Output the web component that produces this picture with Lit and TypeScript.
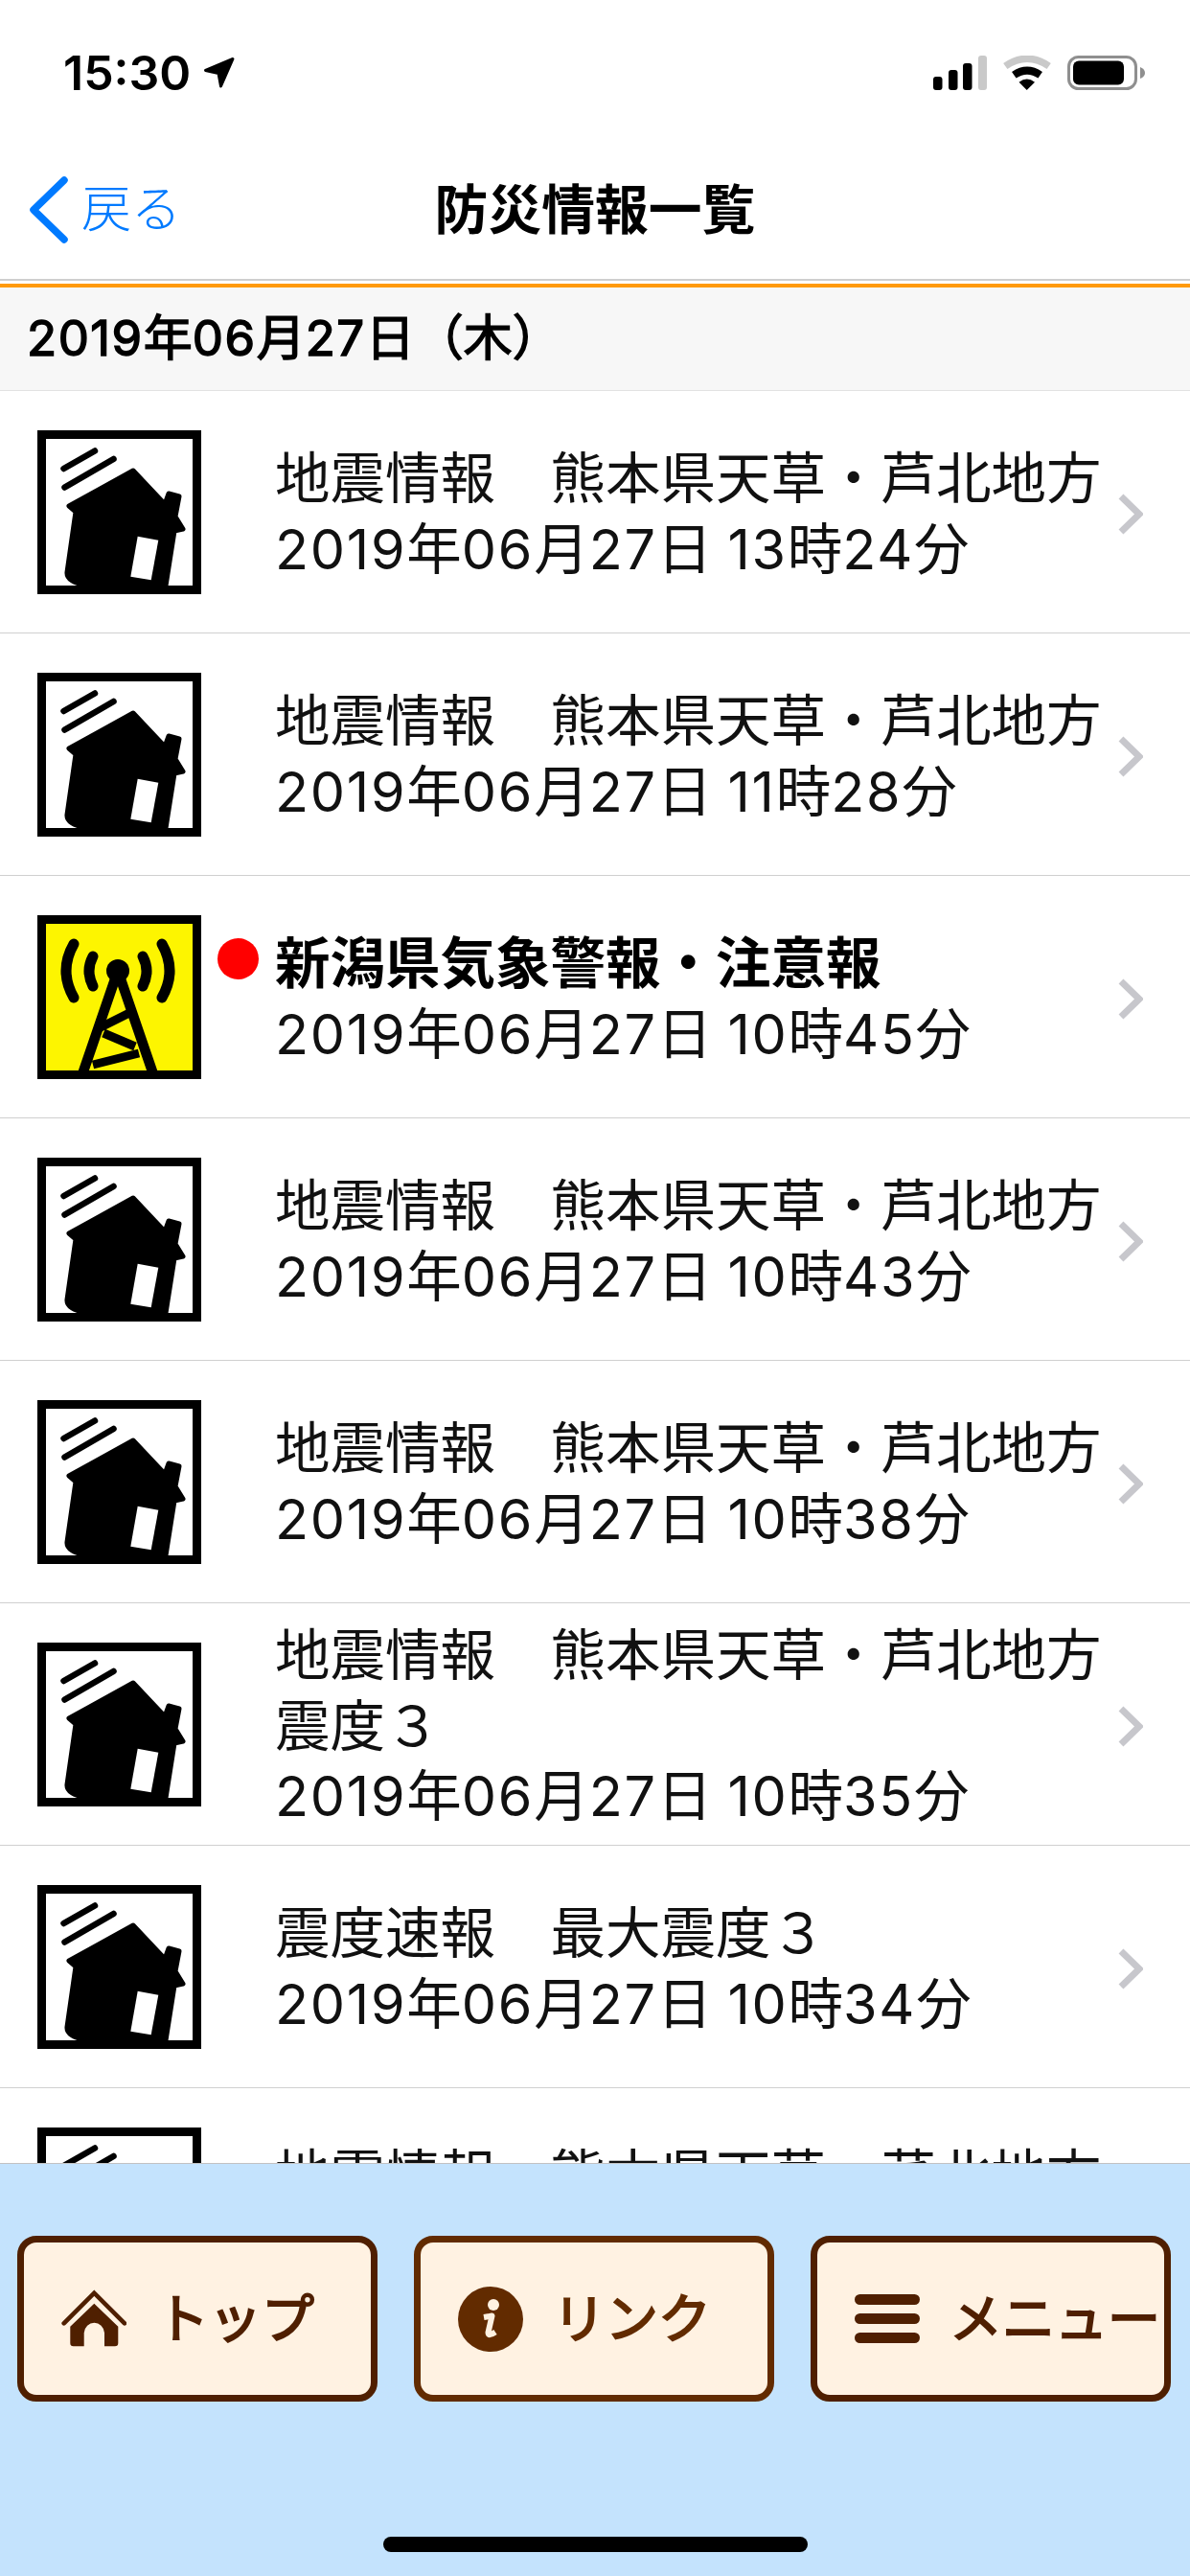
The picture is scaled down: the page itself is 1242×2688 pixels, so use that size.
import { LitElement, css, html, svg } from 'lit';
import { customElement } from 'lit/decorators.js';

type Row = { kind: 'quake' | 'alert'; lines: string[]; unread?: boolean };

const QUAKE = '地震情報　熊本県天草・芦北地方';

const rows: Row[] = [
  { kind: 'quake', lines: [QUAKE, '2019年06月27日 13時24分'] },
  { kind: 'quake', lines: [QUAKE, '2019年06月27日 11時28分'] },
  { kind: 'alert', unread: true, lines: ['新潟県気象警報・注意報', '2019年06月27日 10時45分'] },
  { kind: 'quake', lines: [QUAKE, '2019年06月27日 10時43分'] },
  { kind: 'quake', lines: [QUAKE, '2019年06月27日 10時38分'] },
  { kind: 'quake', lines: [QUAKE, '震度３', '2019年06月27日 10時35分'] },
  { kind: 'quake', lines: ['震度速報　最大震度３', '2019年06月27日 10時34分'] },
  { kind: 'quake', lines: [QUAKE, '2019年06月27日 10時30分'] },
];

const quakeIcon = svg`
  <rect x="4.5" y="4.5" width="162" height="162" fill="#fff" stroke="#000" stroke-width="9" />
  <path d="M27.5 40 60 21.5M28.5 59.5 79.5 30" stroke="#000" stroke-width="6.5" stroke-linecap="round" fill="none" />
  <path
    d="M33 79 100 42 133 77 137 66 148 69 144 90 152 103 143 105 134 162H52Q30 158 31 148L40 85Z"
    fill="#000" stroke="#000" stroke-width="5" stroke-linejoin="round" />
  <path d="M104.7 110.7 126.3 114.7 118.7 156.3 97.3 152.7Z" fill="#fff" />
`;

const alertIcon = svg`
  <rect x="4.5" y="4.5" width="162" height="162" fill="#fdf500" />
  <g fill="none" stroke="#000" stroke-linecap="round" stroke-width="11">
    <path d="M38 30Q22 58 38 86M58 43Q50 58 58 74M130 30Q146 58 130 86M110 43Q118 58 110 74" />
  </g>
  <g fill="none" stroke="#000" stroke-width="10.5">
    <path d="M84 58 47 166M84 58 121 166" />
  </g>
  <g fill="none" stroke="#000" stroke-width="9">
    <path d="M66 117 102 99M69 123 102 137M58 156 106 144" />
  </g>
  <circle cx="84" cy="58" r="12" fill="#000" />
  <rect x="4.5" y="4.5" width="162" height="162" fill="none" stroke="#000" stroke-width="9" />
`;

// digits run a little wider than Inter's, so they get their own tracking
const spaced = (text: string) =>
  text.split(/(\d+)/).map((part, i) => (i % 2 ? html`<span class="num">${part}</span>` : part));

@customElement('app-root')
export class AppRoot extends LitElement {
  static styles = css`
    :host {
      display: flex;
      flex-direction: column;
      height: 2688px;
      overflow: hidden;
      background: #fff;
      color: #000;
      font-family: Inter, 'Noto Sans CJK JP', sans-serif;
    }

    svg {
      display: block;
      flex: none;
    }

    .num {
      letter-spacing: 0.03em;
    }

    .status {
      display: flex;
      align-items: flex-start;
      height: 130px;
      box-sizing: border-box;
      padding: 46px 46px 0 66px;
    }

    .clock {
      font-size: 50px;
      font-weight: 600;
      line-height: 60px;
    }

    .arrow {
      margin: 13px 0 0 13px;
    }

    .status-icons {
      display: flex;
      gap: 17px;
      margin: 12px 0 0 auto;
    }

    .nav {
      display: grid;
      grid-template-columns: 1fr auto 1fr;
      align-items: center;
      height: 163px;
      box-sizing: border-box;
      padding-top: 8px;
      border-bottom: 2px solid #cfcfcf;
    }

    .back {
      display: flex;
      align-items: center;
      gap: 13px;
      padding-left: 30px;
      color: #007aff;
      font-size: 52px;
      font-weight: 300;
    }

    .back svg {
      margin-top: 8px;
    }

    .title {
      font-size: 55.8px;
      font-weight: 700;
    }

    .accent {
      height: 4px;
      margin-top: 3px;
      background: #ff9a0a;
    }

    .section {
      display: flex;
      align-items: center;
      height: 108px;
      box-sizing: border-box;
      padding: 0 0 10px 28px;
      background: #f7f7f7;
      border-bottom: 1px solid #e2e2e2;
      font-size: 51px;
      -webkit-text-stroke: 1.5px currentColor;
    }

    .list {
      flex: 1;
      min-height: 0;
      overflow: hidden;
    }

    .row {
      display: flex;
      align-items: center;
      height: 253px;
      box-sizing: border-box;
      padding: 0 49px 0 39px;
      border-bottom: 1.5px solid #d0d0d0;
    }

    .mark {
      align-self: flex-start;
      width: 77px;
      height: 43px;
      margin-top: 65px;
      padding-left: 17px;
      box-sizing: border-box;
      flex: none;
    }

    .dot {
      width: 43px;
      height: 43px;
      border-radius: 50%;
      background: #ff0000;
    }

    .text {
      flex: 1;
      min-width: 0;
      padding-top: 5px;
      font-size: 57.5px;
      line-height: 73.4px;
      color: #111;
      white-space: nowrap;
    }

    .text .strong {
      font-weight: 700;
      color: #000;
    }

    .chevron {
      margin-top: 4px;
    }

    .bar {
      display: flex;
      flex-direction: column;
      height: 431px;
      box-sizing: border-box;
      padding-top: 75px;
      background: #c4e3fd;
      border-top: 1px solid #c2c2c2;
    }

    .buttons {
      display: flex;
      gap: 38px;
      padding-left: 18px;
    }

    .button {
      display: flex;
      align-items: center;
      gap: 31px;
      width: 376px;
      height: 173px;
      box-sizing: border-box;
      padding-left: 39px;
      border: 7px solid #4f1f00;
      border-radius: 20px;
      background: #fff2e2;
      color: #4f1f00;
      font-size: 55px;
      -webkit-text-stroke: 2px currentColor;
      white-space: nowrap;
    }

    .button span {
      margin-bottom: 10px;
    }

    .button.info {
      border-color: #622b00;
      color: #622b00;
    }

    .home-bar {
      align-self: center;
      width: 443px;
      height: 16px;
      margin-top: 141px;
      border-radius: 8px;
      background: #000;
    }
  `;

  private renderStatus() {
    return html`
      <div class="status">
        <span class="clock">15:30</span>
        <svg class="arrow" width="33" height="33" viewBox="0 0 33 33">
          <path d="M31 2.500 2.500 14.500 16 17.500 18.500 31Z" fill="#000" stroke="#000" stroke-width="3" stroke-linejoin="round" />
        </svg>
        <div class="status-icons">
          <svg width="56" height="36" viewBox="0 0 56 36">
            <rect x="0" y="22" width="9.500" height="14" rx="3" />
            <rect x="16" y="15" width="9.500" height="21" rx="3" />
            <rect x="31" y="8" width="9.500" height="28" rx="3" />
            <rect x="47" y="0" width="9" height="36" rx="3" fill="#c9c9c9" />
          </svg>
          <svg width="50" height="36" viewBox="0 0 50 36">
            <path d="M2.300 11Q25 -4.400 47.700 11" fill="none" stroke="#c9c9c9" stroke-width="7.500" />
            <path d="M11.300 20.300Q25 11 38.700 20.300" fill="none" stroke="#000" stroke-width="8" />
            <path d="M24.700 36 16.500 27.700Q24.700 21.500 33 27.700Z" />
          </svg>
          <svg width="82" height="36" viewBox="0 0 82 36">
            <rect x="1.500" y="1.500" width="70" height="33" rx="10" fill="none" stroke="#8f8f8f" stroke-width="3" />
            <rect x="6" y="5.500" width="53" height="25" rx="6" />
            <path d="M76 12Q81 14 81 18T76 24Z" fill="#8f8f8f" />
          </svg>
        </div>
      </div>
    `;
  }

  private renderRow(row: Row) {
    return html`
      <div class="row">
        <svg width="171" height="171" viewBox="0 0 171 171">${row.kind === 'quake' ? quakeIcon : alertIcon}</svg>
        <div class="mark">${row.unread ? html`<div class="dot"></div>` : ''}</div>
        <div class="text">
          ${row.lines.map((line, i) => html`<div class=${row.unread && i === 0 ? 'strong' : ''}>${spaced(line)}</div>`)}
        </div>
        <svg class="chevron" width="26" height="43" viewBox="0 0 26 43">
          <path d="M3 3 22 21.500 3 40" fill="none" stroke="#c7c7cc" stroke-width="7" />
        </svg>
      </div>
    `;
  }

  render() {
    return html`
      ${this.renderStatus()}
      <div class="nav">
        <div class="back">
          <svg width="42" height="70" viewBox="0 0 42 70">
            <path d="M37 4 5 35 37 66" fill="none" stroke="#007aff" stroke-width="7.500" stroke-linecap="round" stroke-linejoin="round" />
          </svg>
          <span>戻る</span>
        </div>
        <div class="title">防災情報一覧</div>
        <div></div>
      </div>
      <div class="accent"></div>
      <div class="section"><span>${spaced('2019年06月27日（木）')}</span></div>
      <div class="list">${rows.map((row) => this.renderRow(row))}</div>
      <div class="bar">
        <div class="buttons">
          <div class="button">
            <svg width="68" height="62" viewBox="0 0 68 62">
              <path d="M2.700 35.300 34.300 3.700 66 35.300" fill="none" stroke="#4f1f00" stroke-width="4.700" stroke-linecap="round" />
              <path
                d="M34.300 14.700 59.300 38.700V56Q59.300 59.300 56 59.300H45V45.300A10.700 11.600 0 0 0 23.700 45.300V59.300H12.600Q9.300 59.300 9.300 56V38.700Z"
                fill="#4f1f00" />
            </svg>
            <span>トップ</span>
          </div>
          <div class="button info">
            <svg width="68" height="68" viewBox="0 0 68 68">
              <circle cx="34" cy="34" r="34" fill="#622b00" />
              <circle cx="37" cy="19" r="6" fill="#fff2e2" />
              <path d="M27 32 35.500 30.500 31.500 48Q31.500 52.500 39 47.500" fill="none" stroke="#fff2e2" stroke-width="6" stroke-linejoin="round" />
            </svg>
            <span>リンク</span>
          </div>
          <div class="button">
            <svg width="68" height="52" viewBox="0 0 68 52">
              <rect x="0" y="0" width="68" height="11" rx="5.500" fill="#4f1f00" />
              <rect x="0" y="20" width="68" height="11" rx="5.500" fill="#4f1f00" />
              <rect x="0" y="40" width="68" height="11" rx="5.500" fill="#4f1f00" />
            </svg>
            <span>メニュー</span>
          </div>
        </div>
        <div class="home-bar"></div>
      </div>
    `;
  }
}
